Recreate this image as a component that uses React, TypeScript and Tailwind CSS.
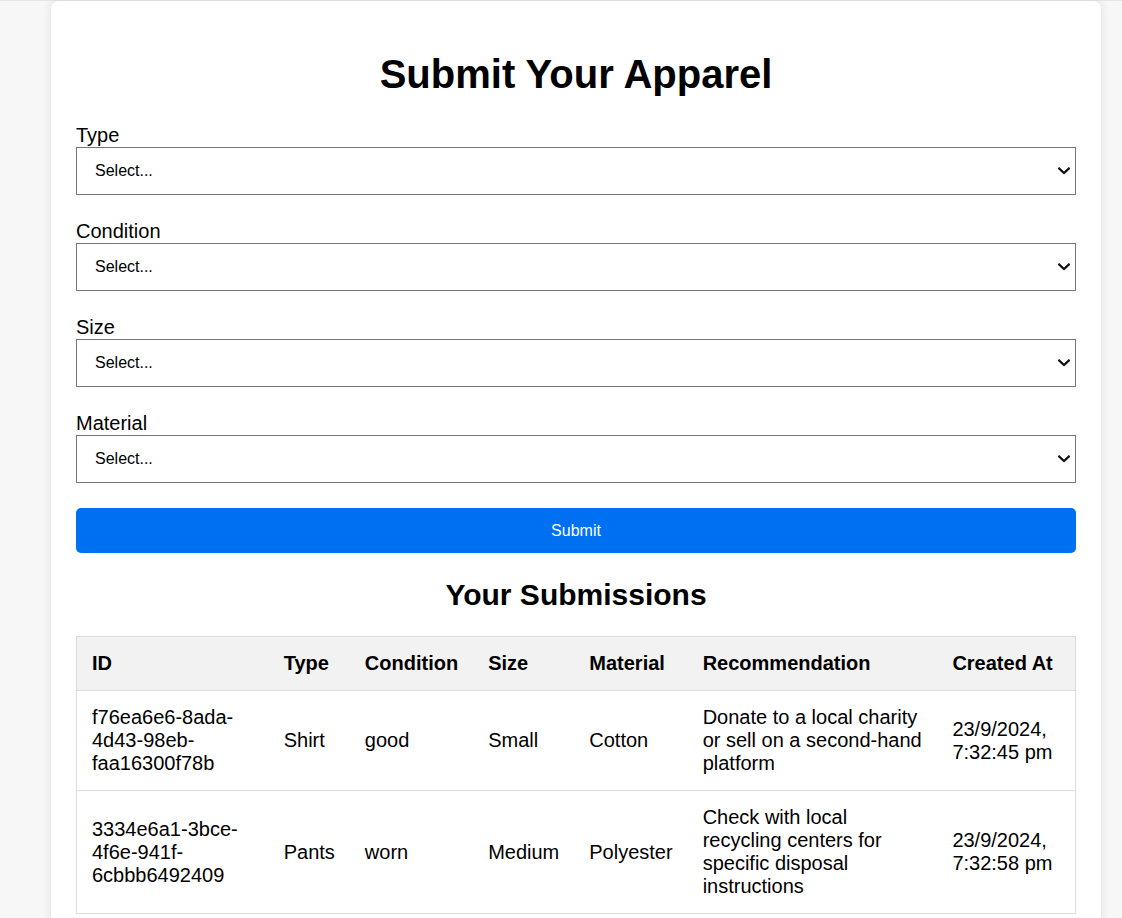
import React from "react";

const fields = ["Type", "Condition", "Size", "Material"];

const rows = [
  {
    id: "f76ea6e6-8ada-4d43-98eb-faa16300f78b",
    type: "Shirt",
    condition: "good",
    size: "Small",
    material: "Cotton",
    rec: "Donate to a local charity or sell on a second-hand platform",
    created: "23/9/2024, 7:32:45 pm",
  },
  {
    id: "3334e6a1-3bce-4f6e-941f-6cbbb6492409",
    type: "Pants",
    condition: "worn",
    size: "Medium",
    material: "Polyester",
    rec: "Check with local recycling centers for specific disposal instructions",
    created: "23/9/2024, 7:32:58 pm",
  },
];

function Chevron() {
  return (
    <svg
      className="pointer-events-none absolute right-[6px] top-1/2 -translate-y-1/2"
      width="12"
      height="8"
      viewBox="0 0 12 8"
      fill="none"
    >
      <path d="M1.2 1.5 L6 6 L10.8 1.5" stroke="#111" strokeWidth="2.2" strokeLinecap="square" />
    </svg>
  );
}

export default function App() {
  return (
    <div
      className="min-h-[918px] border-t border-[#e6e6e6] bg-[#f7f7f7] pl-[51px] text-black"
      style={{ fontFamily: '"Liberation Sans", Arial, sans-serif' }}
    >
      <div className="w-[1050px] rounded-[8px] bg-white px-[25px] pt-[23px] pb-[25px] shadow-[0_0_10px_rgba(0,0,0,0.1)]">
        <h1 className="my-[27px] text-center text-[40px] leading-[46px] font-bold">Submit Your Apparel</h1>
        <form onSubmit={(e) => e.preventDefault()}>
          {fields.map((f) => (
            <div key={f} className="mb-[25px]">
              <label className="block text-[20px] leading-[23px]">{f}</label>
              <div className="relative">
                <select className="block h-[48px] w-full appearance-none border border-[#767676] bg-white pl-[18px] text-[16px] text-black">
                  <option>Select...</option>
                </select>
                <Chevron />
              </div>
            </div>
          ))}
          <button
            type="submit"
            className="block w-full rounded-[5px] bg-[#0070f3] py-[13px] text-center text-[16px] leading-[19px] text-white"
          >
            Submit
          </button>
        </form>
        <h2 className="mt-[25px] mb-[24px] text-center text-[30px] leading-[34px] font-bold">Your Submissions</h2>
        <table className="w-full border-collapse border border-[#ddd] text-[20px] leading-[23px]">
          <thead>
            <tr className="bg-[#f2f2f2]">
              {["ID", "Type", "Condition", "Size", "Material", "Recommendation", "Created At"].map((h) => (
                <th key={h} className="border-b border-[#ddd] p-[15px] text-left font-bold">
                  {h}
                </th>
              ))}
            </tr>
          </thead>
          <tbody>
            {rows.map((r) => (
              <tr key={r.id}>
                <td className="border-b border-[#ddd] p-[15px]">{r.id}</td>
                <td className="border-b border-[#ddd] p-[15px]">{r.type}</td>
                <td className="border-b border-[#ddd] p-[15px]">{r.condition}</td>
                <td className="border-b border-[#ddd] p-[15px]">{r.size}</td>
                <td className="border-b border-[#ddd] p-[15px]">{r.material}</td>
                <td className="border-b border-[#ddd] p-[15px]">{r.rec}</td>
                <td className="border-b border-[#ddd] p-[15px]">{r.created}</td>
              </tr>
            ))}
          </tbody>
        </table>
      </div>
    </div>
  );
}
